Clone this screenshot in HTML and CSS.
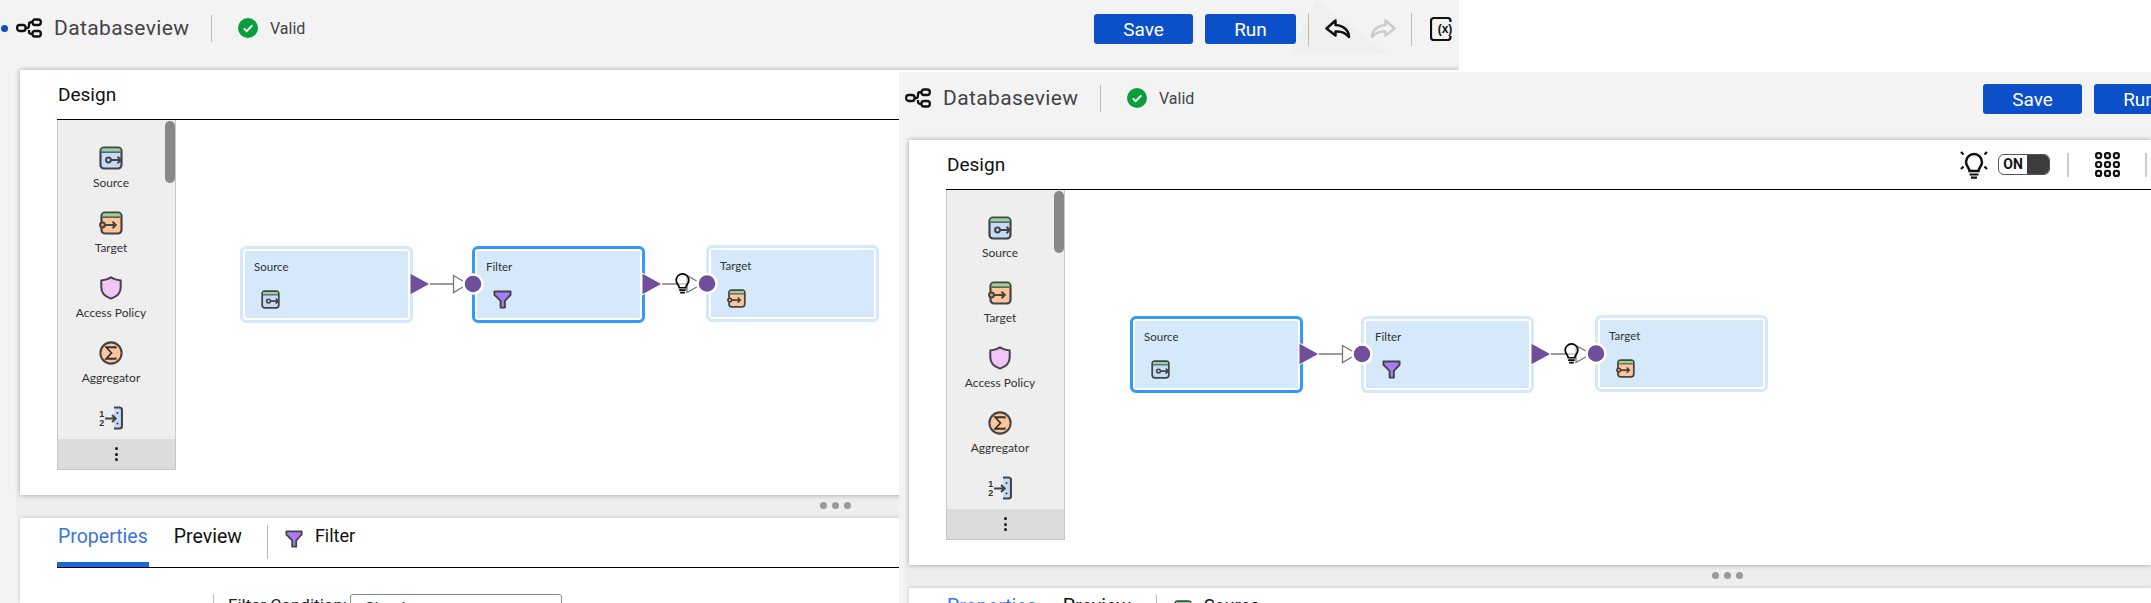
FILE: index.html
```html
<!DOCTYPE html>
<html lang="en">
<head>
    <meta charset="UTF-8">
    <meta name="viewport" content="width=device-width, initial-scale=1.0">
    <title>Databaseview</title>
    <link rel="stylesheet" href="styles.css">
</head>
<body>
    <svg class="defs" width="0" height="0" aria-hidden="true">
        <symbol id="i-flow" viewBox="0 0 26 20">
            <g fill="none" stroke="#111" stroke-width="2.300">
                <rect x="1.200" y="7" width="8.300" height="6" rx="2.500"/>
                <rect x="16.500" y="1.500" width="8.300" height="5.500" rx="2.500"/>
                <rect x="16.500" y="13" width="8.300" height="5.500" rx="2.500"/>
                <path d="M9.500 10H11.500C13 10 13 8.500 13 7V6C13 4.800 14 4 16.500 4M13 12V14C13 15.200 14 16 16.500 16"/>
            </g>
        </symbol>
        <symbol id="i-check" viewBox="0 0 20 20">
            <circle cx="10" cy="10" r="10" fill="#0a9e3c"/>
            <path d="M5.800 10.400L8.700 13.200L14.300 7.400" fill="none" stroke="#fff" stroke-width="2"/>
        </symbol>
        <symbol id="i-undo" viewBox="0 0 26 20">
            <path d="M10.500 1.500L1.500 9.500L10.500 16.500V12.500C15.500 12 20 13 24 18C24 11.500 18.500 6.500 10.500 6Z" fill="none" stroke-width="2.500" stroke-linejoin="round"/>
        </symbol>
        <symbol id="i-var" viewBox="0 0 24 24">
            <path d="M20.500 5V4A3 3 0 0 0 17.500 1H4A3 3 0 0 0 1 4V20A3 3 0 0 0 4 23H17.500A3 3 0 0 0 20.500 20V19" fill="none" stroke="#111" stroke-width="2.200"/>
            <text x="15" y="15.500" text-anchor="middle" class="icon-text">(x)</text>
        </symbol>
        <symbol id="i-source" viewBox="0 0 24 24">
            <rect x="1.500" y="1.500" width="21" height="21" rx="3.500" fill="#c6dbfa" stroke="#444" stroke-width="2.200"/>
            <rect x="2.600" y="2.600" width="18.800" height="2.800" fill="#8fd68f"/>
            <rect x="2.600" y="5.400" width="18.800" height="1.500" fill="#555"/>
            <circle cx="9.500" cy="14" r="2.400" fill="none" stroke="#444" stroke-width="2"/>
            <path d="M12 14H21.500M18.500 10.800L21.800 14L18.500 17.200" fill="none" stroke="#444" stroke-width="2"/>
        </symbol>
        <symbol id="i-target" viewBox="0 0 24 24">
            <rect x="2.500" y="1.500" width="20" height="21" rx="3.500" fill="#ffc49a" stroke="#444" stroke-width="2.200"/>
            <rect x="3.600" y="2.600" width="17.800" height="2.800" fill="#8fd68f"/>
            <rect x="3.600" y="5.400" width="17.800" height="1.500" fill="#555"/>
            <circle cx="3.500" cy="14" r="2.400" fill="#ff9d57" stroke="#444" stroke-width="2"/>
            <path d="M6 14H16.500M13.500 10.800L16.800 14L13.500 17.200" fill="none" stroke="#444" stroke-width="2"/>
        </symbol>
        <symbol id="i-shield" viewBox="0 0 24 26">
            <path d="M12 1.500C15 3.500 18.500 4.500 22.500 5V12.500C22.500 18 18 22.500 12 24.500C6 22.500 1.500 18 1.500 12.500V5C5.500 4.500 9 3.500 12 1.500Z" fill="#f1c4fb" stroke="#444" stroke-width="2.200"/>
        </symbol>
        <symbol id="i-sigma" viewBox="0 0 26 26">
            <circle cx="13" cy="13" r="11.500" fill="#ffc49a" stroke="#444" stroke-width="2.200"/>
            <path d="M18 8V6.800H7.800L13.500 13L7.800 19.200H18V18" fill="none" stroke="#333" stroke-width="2"/>
        </symbol>
        <symbol id="i-rank" viewBox="0 0 24 24">
            <path d="M15 1.500H20.500A2.500 2.500 0 0 1 23 4V20A2.500 2.500 0 0 1 20.500 22.500H15V17L12 12L15 7Z" fill="#c6dbfa"/>
            <path d="M15 1.500H20.500A2.500 2.500 0 0 1 23 4V20A2.500 2.500 0 0 1 20.500 22.500H15" fill="none" stroke="#444" stroke-width="2.200"/>
            <path d="M6 12.500H16.500M13 9L16.800 12.500L13 16" fill="none" stroke="#444" stroke-width="2"/>
            <circle cx="18.500" cy="7" r="1" fill="#333"/>
            <circle cx="18.500" cy="17.500" r="1" fill="#333"/>
            <text x="2.800" y="10.500" text-anchor="middle" class="icon-digit">1</text>
            <text x="2.800" y="20" text-anchor="middle" class="icon-digit">2</text>
        </symbol>
        <symbol id="i-funnel" viewBox="0 0 20 20">
            <path d="M1.500 1.500H18.500V5L12.500 11.500V18.500H8V11.500L1.500 5Z" fill="#a97cf5" stroke="#444" stroke-width="2" stroke-linejoin="round"/>
        </symbol>
        <symbol id="i-bulb" viewBox="0 0 16 22">
            <path d="M4.500 15.500C4.500 12.500 1.300 11.500 1.300 7.500A6.700 6.700 0 0 1 14.700 7.500C14.700 11.500 11.500 12.500 11.500 15.500Z" fill="#fff" fill-opacity="0.550" stroke="#000" stroke-width="1.800"/>
            <path d="M4.500 18H11.500M5.500 20.700H10.500" stroke="#000" stroke-width="1.800"/>
        </symbol>
        <symbol id="i-bulb-rays" viewBox="0 0 28 28">
            <path d="M9.500 20C9.500 16.800 6 15.500 6 11A8 8 0 0 1 22 11C22 15.500 18.500 16.800 18.500 20Z" fill="none" stroke="#111" stroke-width="2.500"/>
            <path d="M9.500 23.500H18.500M11 26.700H17" stroke="#111" stroke-width="2.200"/>
            <path d="M1 1L3.500 3.500M27 1L24.500 3.500M1 18L3.500 15.500M27 18L24.500 15.500" stroke="#111" stroke-width="2.200"/>
        </symbol>
        <symbol id="i-grid" viewBox="0 0 25 25">
            <g fill="none" stroke="#111" stroke-width="2.200">
                <rect x="1.100" y="1.100" width="5" height="5" rx="2"/>
                <rect x="10" y="1.100" width="5" height="5" rx="2"/>
                <rect x="18.900" y="1.100" width="5" height="5" rx="2"/>
                <rect x="1.100" y="10" width="5" height="5" rx="2"/>
                <rect x="10" y="10" width="5" height="5" rx="2"/>
                <rect x="18.900" y="10" width="5" height="5" rx="2"/>
                <rect x="1.100" y="18.900" width="5" height="5" rx="2"/>
                <rect x="10" y="18.900" width="5" height="5" rx="2"/>
                <rect x="18.900" y="18.900" width="5" height="5" rx="2"/>
            </g>
        </symbol>
        <symbol id="i-links" viewBox="0 0 560 40">
            <!-- first link, y is relative to the port row -->
            <path d="M253 20H278" stroke="#666" stroke-width="1.300"/>
            <path d="M277.500 11.500L292 20L277.500 28.500Z" fill="#fff" stroke="#777" stroke-width="1.300"/>
            <path d="M234 9L254 20L234 31Z" fill="#6f4e9c" stroke="#fff" stroke-width="1"/>
            <circle cx="297" cy="20" r="9.500" fill="#6f4e9c" stroke="#fff" stroke-width="2.500"/>
            <!-- second link -->
            <path d="M486 20H512" stroke="#666" stroke-width="1.300"/>
            <path d="M511 11.500L526 20L511 28.500Z" fill="#fff" stroke="#777" stroke-width="1.300"/>
            <path d="M466 9L486 20L466 31Z" fill="#6f4e9c" stroke="#fff" stroke-width="1"/>
            <circle cx="531" cy="19.500" r="9.500" fill="#6f4e9c" stroke="#fff" stroke-width="2.500"/>
        </symbol>
    </svg>

    <!-- back window -->
    <section class="win win-back">
        <div class="glare"></div>
        <header class="win-head">
            <span class="status-dot"></span>
            <div class="head-main">
                <svg class="i-flow"><use href="#i-flow"/></svg>
                <span class="doc-name">Databaseview</span>
                <span class="head-sep"></span>
                <svg class="i-check"><use href="#i-check"/></svg>
                <span class="valid">Valid</span>
            </div>
            <button class="btn btn-save">Save</button>
            <button class="btn btn-run">Run</button>
            <span class="tool-sep"></span>
            <svg class="i-undo"><use href="#i-undo"/></svg>
            <svg class="i-redo"><use href="#i-undo"/></svg>
            <span class="tool-sep tool-sep-b"></span>
            <svg class="i-var"><use href="#i-var"/></svg>
        </header>
        <div class="card">
            <div class="card-head"><span class="card-title">Design</span></div>
            <div class="canvas">
                <aside class="palette">
                    <div class="palette-list">
                        <div class="pal-item"><svg class="pal-icon"><use href="#i-source"/></svg><span>Source</span></div>
                        <div class="pal-item"><svg class="pal-icon"><use href="#i-target"/></svg><span>Target</span></div>
                        <div class="pal-item"><svg class="pal-icon"><use href="#i-shield"/></svg><span>Access Policy</span></div>
                        <div class="pal-item"><svg class="pal-icon"><use href="#i-sigma"/></svg><span>Aggregator</span></div>
                        <div class="pal-item"><svg class="pal-icon"><use href="#i-rank"/></svg></div>
                    </div>
                    <div class="scroll-thumb"></div>
                    <div class="palette-foot"><i></i><i></i><i></i></div>
                </aside>
                <div class="diagram">
                    <div class="node node-source">
                        <span class="node-name">Source</span>
                        <svg class="node-icon"><use href="#i-source"/></svg>
                    </div>
                    <div class="node node-filter is-selected">
                        <span class="node-name">Filter</span>
                        <svg class="node-icon"><use href="#i-funnel"/></svg>
                    </div>
                    <div class="node node-target">
                        <span class="node-name">Target</span>
                        <svg class="node-icon"><use href="#i-target"/></svg>
                    </div>
                    <svg class="links"><use href="#i-links"/></svg>
                    <svg class="link-bulb"><use href="#i-bulb"/></svg>
                </div>
            </div>
        </div>
        <div class="splitter"><i></i><i></i><i></i></div>
        <div class="panel">
            <div class="tabs">
                <span class="tab is-active">Properties</span>
                <span class="tab tab-preview">Preview</span>
                <span class="tab-sep"></span>
                <svg class="tab-icon"><use href="#i-funnel"/></svg>
                <span class="tab-name">Filter</span>
            </div>
            <div class="prop-row">
                <span class="prop-sep"></span>
                <label class="prop-label">Filter Condition:</label>
                <div class="prop-select">Simple</div>
            </div>
        </div>
    </section>

    <!-- front window -->
    <section class="win win-front">
        <header class="win-head">
            <div class="head-main">
                <svg class="i-flow"><use href="#i-flow"/></svg>
                <span class="doc-name">Databaseview</span>
                <span class="head-sep"></span>
                <svg class="i-check"><use href="#i-check"/></svg>
                <span class="valid">Valid</span>
            </div>
            <button class="btn btn-save">Save</button>
            <button class="btn btn-run">Run</button>
        </header>
        <div class="card">
            <div class="card-head">
                <span class="card-title">Design</span>
                <svg class="i-bulb-rays"><use href="#i-bulb-rays"/></svg>
                <span class="toggle"><b>ON</b><i></i></span>
                <span class="design-sep"></span>
                <svg class="i-grid"><use href="#i-grid"/></svg>
                <span class="design-sep design-sep-b"></span>
            </div>
            <div class="canvas">
                <aside class="palette">
                    <div class="palette-list">
                        <div class="pal-item"><svg class="pal-icon"><use href="#i-source"/></svg><span>Source</span></div>
                        <div class="pal-item"><svg class="pal-icon"><use href="#i-target"/></svg><span>Target</span></div>
                        <div class="pal-item"><svg class="pal-icon"><use href="#i-shield"/></svg><span>Access Policy</span></div>
                        <div class="pal-item"><svg class="pal-icon"><use href="#i-sigma"/></svg><span>Aggregator</span></div>
                        <div class="pal-item"><svg class="pal-icon"><use href="#i-rank"/></svg></div>
                    </div>
                    <div class="scroll-thumb"></div>
                    <div class="palette-foot"><i></i><i></i><i></i></div>
                </aside>
                <div class="diagram">
                    <div class="node node-source is-selected">
                        <span class="node-name">Source</span>
                        <svg class="node-icon"><use href="#i-source"/></svg>
                    </div>
                    <div class="node node-filter">
                        <span class="node-name">Filter</span>
                        <svg class="node-icon"><use href="#i-funnel"/></svg>
                    </div>
                    <div class="node node-target">
                        <span class="node-name">Target</span>
                        <svg class="node-icon"><use href="#i-target"/></svg>
                    </div>
                    <svg class="links"><use href="#i-links"/></svg>
                    <svg class="link-bulb"><use href="#i-bulb"/></svg>
                </div>
            </div>
        </div>
        <div class="splitter"><i></i><i></i><i></i></div>
        <div class="panel">
            <div class="tabs">
                <span class="tab is-active">Properties</span>
                <span class="tab tab-preview">Preview</span>
                <span class="tab-sep"></span>
                <svg class="tab-icon"><use href="#i-source"/></svg>
                <span class="tab-name">Source</span>
            </div>
        </div>
    </section>
</body>
</html>
```

FILE: styles.css
```css
body { margin: 0; width: 2151px; height: 603px; overflow: hidden; position: relative; background: #fff; font-family: Roboto, Arial, sans-serif; }
.defs { position: absolute; }
.icon-text { font: bold 12px "Liberation Sans", sans-serif; fill: #111; }
.icon-digit { font: bold 9px "Liberation Sans", sans-serif; fill: #333; }

/* the two overlapping windows */
.win { position: absolute; overflow: hidden; background: #f3f3f3; }
.win-back { left: 0; top: 0; width: 1459px; height: 603px; }
.win-front { left: 899px; top: 72px; width: 1252px; height: 531px; }
.glare { position: absolute; left: 1293px; top: 0; width: 95px; height: 53px; background: #efefef; clip-path: polygon(24% 0, 100% 100%, 0 100%); }

/* header */
.win-head { display: flex; align-items: center; height: 70px; padding: 0 0 12px 16px; box-sizing: border-box; position: relative; }
.win-front .win-head { height: 68px; padding: 0 0 14px 6px; }
.win-head > * { position: relative; }
.status-dot { position: absolute !important; left: 1px; top: 25px; width: 7px; height: 7px; border-radius: 50%; background: #0b50c8; }
.head-main { display: flex; align-items: center; width: 1078px; flex: none; padding-bottom: 2px; }
.i-flow { width: 26px; height: 20px; margin-right: 12px; }
.doc-name { width: 157px; font-size: 21px; letter-spacing: 0.4px; color: #444; }
.head-sep { width: 1px; height: 27px; background: #bbb; }
.i-check { width: 20px; height: 20px; margin-left: 26px; }
.valid { margin-left: 12px; font-size: 16px; color: #444; }
.btn { flex: none; height: 30px; border: none; border-radius: 3px; background: #0b50c8; color: #fff; font: 19px Roboto, Arial, sans-serif; padding: 0; }
.btn-save { width: 99px; margin-right: 12px; }
.btn-run { width: 91px; margin-right: 12px; }
.tool-sep { width: 1px; height: 33px; background: #bbb; margin-right: 16px; }
.tool-sep-b { margin: 0 18px 0 15px; }
.i-undo { width: 26px; height: 20px; stroke: #111; margin-right: 19px; }
.i-redo { width: 26px; height: 20px; stroke: #ccc; transform: scaleX(-1); }
.i-var { width: 24px; height: 24px; }

/* design card */
.card { height: 425px; margin-left: 20px; background: #fff; box-shadow: 0 0 5px rgba(0, 0, 0, 0.35); position: relative; }
.win-front .card { margin-left: 10px; }
.card-head { display: flex; align-items: center; height: 49px; margin-left: 37px; border-bottom: 1px solid #000; }
.card-title { flex: none; width: 1013px; margin-left: 1px; font-size: 19px; color: #111; }
.i-bulb-rays { width: 28px; height: 28px; }
.toggle { display: flex; width: 52px; height: 21px; margin-left: 10px; box-sizing: border-box; border: 1px solid #555; border-radius: 6px; overflow: hidden; }
.toggle b { width: 28px; font: bold 14px/19px Roboto, sans-serif; text-align: center; color: #111; }
.toggle i { flex: 1; background: #3c3c3c; }
.design-sep { width: 2px; height: 24px; margin: 0 26px 0 17px; background: #ccc; }
.design-sep-b { margin: 0 0 0 25px; }
.i-grid { width: 25px; height: 25px; }
.canvas { display: flex; margin-left: 37px; height: 350px; }

/* palette */
.palette { flex: none; width: 119px; box-sizing: border-box; border: 1px solid #c8c8c8; border-top: none; background: #eee; display: flex; flex-direction: column; position: relative; }
.palette-list { height: 319px; width: 106px; overflow: hidden; padding-top: 26px; box-sizing: border-box; }
.pal-item { display: flex; flex-direction: column; align-items: center; height: 65px; font: 12px Lato, Arial, sans-serif; color: #333; }
.pal-icon { width: 24px; height: 24px; margin-bottom: 5px; }
.scroll-thumb { position: absolute; right: 0; top: 1px; width: 10px; height: 62px; border-radius: 5px; background: #888; }
.palette-foot { flex: 1; background: #dcdcdc; display: flex; flex-direction: column; align-items: center; justify-content: center; gap: 2.500px; }
.palette-foot i { width: 3px; height: 3px; border-radius: 50%; background: #111; }

/* diagram, nodes sit on a free canvas */
.diagram { flex: 1; position: relative; }
.node { position: absolute; top: 126px; width: 173px; height: 77px; box-sizing: border-box; padding: 11px 11px; border: 3px solid #d4e9fb; border-radius: 6px; background: #d5e9fb; box-shadow: inset 0 0 0 2px #fff; font: 11.5px Lato, Arial, sans-serif; color: #333; }
.node.is-selected { border-color: #3399ff; }
.node-source { left: 64px; }
.node-filter { left: 296px; }
.node-target { left: 530px; top: 125px; }
.win-front .node-source { left: 65px; }
.node-name { display: block; }
.node-icon { display: block; width: 19px; height: 19px; margin: 17px 0 0 7px; }
.links { position: absolute; left: 0; top: 144px; width: 560px; height: 40px; }
.link-bulb { position: absolute; left: 499px; top: 153px; width: 15px; height: 21px; }

/* splitter + lower panel */
.splitter { display: flex; align-items: center; gap: 5px; height: 23px; margin-left: 16px; padding-left: 804px; padding-bottom: 2px; box-sizing: border-box; background: #eee; }
.win-front .splitter { margin-left: 6px; padding-left: 807px; }
.splitter i { width: 7px; height: 7px; border-radius: 50%; background: #999; }
.panel { margin-left: 20px; height: 85px; background: #fff; box-shadow: 0 0 4px rgba(0, 0, 0, 0.2); position: relative; }
.win-front .panel { margin-left: 10px; }
.tabs { display: flex; align-items: flex-start; height: 49px; margin-left: 37px; border-bottom: 1px solid #000; position: relative; }
.tab { margin-top: 7px; font-size: 19.5px; color: #111; padding: 0 1px; }
.tab.is-active { color: #3a74e0; height: 42px; box-sizing: border-box; border-bottom: 5px solid #1a66dd; }
.tab-preview { margin-left: 24px; }
.tab-sep { width: 1px; height: 34px; margin: 7px 17px 0 24px; background: #bbb; }
.tab-icon { width: 18px; height: 18px; margin-top: 12px; }
.tab-name { margin: 7px 0 0 12px; font-size: 18px; color: #111; }
.prop-row { display: flex; align-items: flex-start; padding-top: 26px; }
.prop-sep { width: 1px; height: 20px; margin-left: 193px; background: #bbb; }
.prop-label { margin-left: 14px; width: 122px; font-size: 17px; line-height: 22px; color: #222; }
.prop-select { width: 212px; height: 26px; box-sizing: border-box; padding: 4px 14px; border: 1px solid #888; border-radius: 3px; font-size: 16px; color: #222; }
```
